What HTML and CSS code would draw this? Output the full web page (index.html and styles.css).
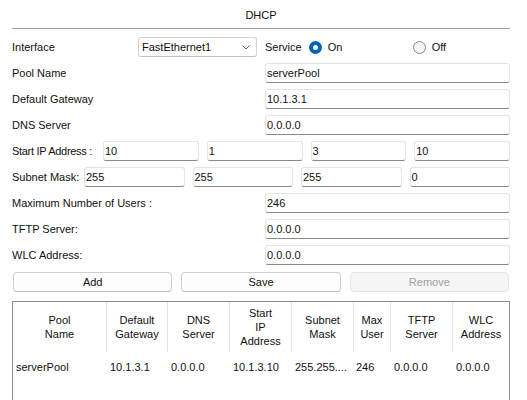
FILE: index.html
```html
<!DOCTYPE html>
<html>
<head>
<meta charset="utf-8">
<link rel="stylesheet" href="styles.css">
</head>
<body>
<div class="panel">
  <div class="title">DHCP</div>
  <div class="form">
    <div class="row">
      <span class="lbl lbl-iface">Interface</span>
      <div class="select"><span>FastEthernet1</span>
        <svg class="chev" width="8" height="5" viewBox="0 0 8 5"><path d="M0.5 0.5 L4 4 L7.5 0.5" fill="none" stroke="#666" stroke-width="1"/></svg>
      </div>
      <span class="service">Service</span>
      <span class="opt opt-on"><span class="radio on"></span>On</span>
      <span class="opt"><span class="radio"></span>Off</span>
    </div>
    <div class="row"><span class="lbl">Pool Name</span><div class="input">serverPool</div></div>
    <div class="row"><span class="lbl">Default Gateway</span><div class="input">10.1.3.1</div></div>
    <div class="row"><span class="lbl">DNS Server</span><div class="input">0.0.0.0</div></div>
    <div class="row ip"><span class="lbl lbl-start">Start IP Address :</span><div class="input">10</div><div class="input">1</div><div class="input">3</div><div class="input">10</div></div>
    <div class="row ip"><span class="lbl lbl-mask">Subnet Mask:</span><div class="input">255</div><div class="input">255</div><div class="input">255</div><div class="input">0</div></div>
    <div class="row"><span class="lbl">Maximum Number of Users :</span><div class="input">246</div></div>
    <div class="row"><span class="lbl">TFTP Server:</span><div class="input">0.0.0.0</div></div>
    <div class="row"><span class="lbl">WLC Address:</span><div class="input">0.0.0.0</div></div>
  </div>
  <div class="buttons">
    <div class="btn">Add</div>
    <div class="btn">Save</div>
    <div class="btn disabled">Remove</div>
  </div>
  <div class="table">
    <div class="thead">
      <div class="th c1">Pool<br>Name</div>
      <div class="th c2">Default<br>Gateway</div>
      <div class="th c3">DNS<br>Server</div>
      <div class="th c4">Start<br>IP<br>Address</div>
      <div class="th c5">Subnet<br>Mask</div>
      <div class="th c6">Max<br>User</div>
      <div class="th c7">TFTP<br>Server</div>
      <div class="th c8 last">WLC<br>Address</div>
    </div>
    <div class="trow">
      <div class="td c1">serverPool</div>
      <div class="td c2">10.1.3.1</div>
      <div class="td c3">0.0.0.0</div>
      <div class="td c4">10.1.3.10</div>
      <div class="td c5">255.255....</div>
      <div class="td c6">246</div>
      <div class="td c7">0.0.0.0</div>
      <div class="td c8">0.0.0.0</div>
    </div>
  </div>
</div>
</body>
</html>
```

FILE: styles.css
```css
html, body {
  margin: 0;
  padding: 0;
  height: 100%;
  overflow: hidden;
  background: #ffffff;
}
body {
  font-family: "Liberation Sans", Arial, sans-serif;
  font-size: 11px;
  color: #111;
}
.panel {
  padding: 0 17px 0 12px;
}
.title {
  text-align: center;
  padding-top: 7px;
  padding-bottom: 5px;
  line-height: 16px;
  border-bottom: 1px solid #a0a0a0;
}
.form {
  margin-top: 8px;
}
.row {
  display: flex;
  align-items: center;
  height: 20px;
  margin-bottom: 6px;
}
.row:last-child {
  margin-bottom: 0;
}
.lbl {
  flex: none;
  width: 253px;
  white-space: nowrap;
}
.lbl-iface {
  width: 126px;
}
.select {
  flex: none;
  width: 119px;
  height: 20px;
  box-sizing: border-box;
  border: 1px solid #d4d4d4;
  border-bottom-color: #c2c2c2;
  border-radius: 3px;
  display: flex;
  align-items: center;
  justify-content: space-between;
  padding: 0 6px 0 3px;
  background: #fff;
}
.chev {
  display: block;
}
.service {
  margin-left: 8px;
}
.opt {
  display: flex;
  align-items: center;
}
.opt-on {
  margin-left: 7px;
  width: 104px;
}
.radio {
  width: 13px;
  height: 13px;
  box-sizing: border-box;
  border-radius: 50%;
  border: 1px solid #8a8a8a;
  background: #f4f4f4;
  margin-right: 6px;
  flex: none;
}
.radio.on {
  border: 4px solid #0063b8;
  background: #ffffff;
}
.input {
  flex: 1;
  min-width: 0;
  height: 20px;
  box-sizing: border-box;
  border: 1px solid #e4e4e4;
  border-bottom-color: #8a8a8a;
  border-radius: 3px;
  padding: 0 1px;
  line-height: 18px;
  background: #fff;
  white-space: nowrap;
}
.row.ip {
  gap: 8px;
}
.lbl-start {
  width: 83px;
  letter-spacing: -0.3px;
}
.lbl-mask {
  width: 64px;
}
.buttons {
  display: flex;
  gap: 9px;
  margin-top: 7px;
  padding: 0 1px;
}
.btn {
  flex: 1;
  height: 20px;
  box-sizing: border-box;
  border: 1px solid #d0d0d0;
  border-bottom-color: #bcbcbc;
  border-radius: 4px;
  background: #fdfdfd;
  text-align: center;
  line-height: 18px;
}
.btn.disabled {
  background: #f5f5f5;
  border-color: #e6e6e6;
  color: #a0a0a0;
}
.table {
  margin-top: 9px;
  border: 1px solid #8c8c8c;
  border-bottom: none;
  height: 99px;
}
.thead, .trow {
  display: grid;
  grid-template-columns: 94px 61px 62px 62px 62px 37px 62px 1fr;
}
.th {
  height: 50px;
  display: flex;
  align-items: center;
  justify-content: center;
  text-align: center;
  line-height: 14px;
  border-right: 1px solid #e2e2e2;
  box-sizing: border-box;
}
.th.last {
  border-right: none;
}
.td {
  padding: 8px 2px 0 3px;
  line-height: 14px;
  white-space: nowrap;
  overflow: hidden;
}
.td.c6 {
  padding-left: 2px;
}
```
